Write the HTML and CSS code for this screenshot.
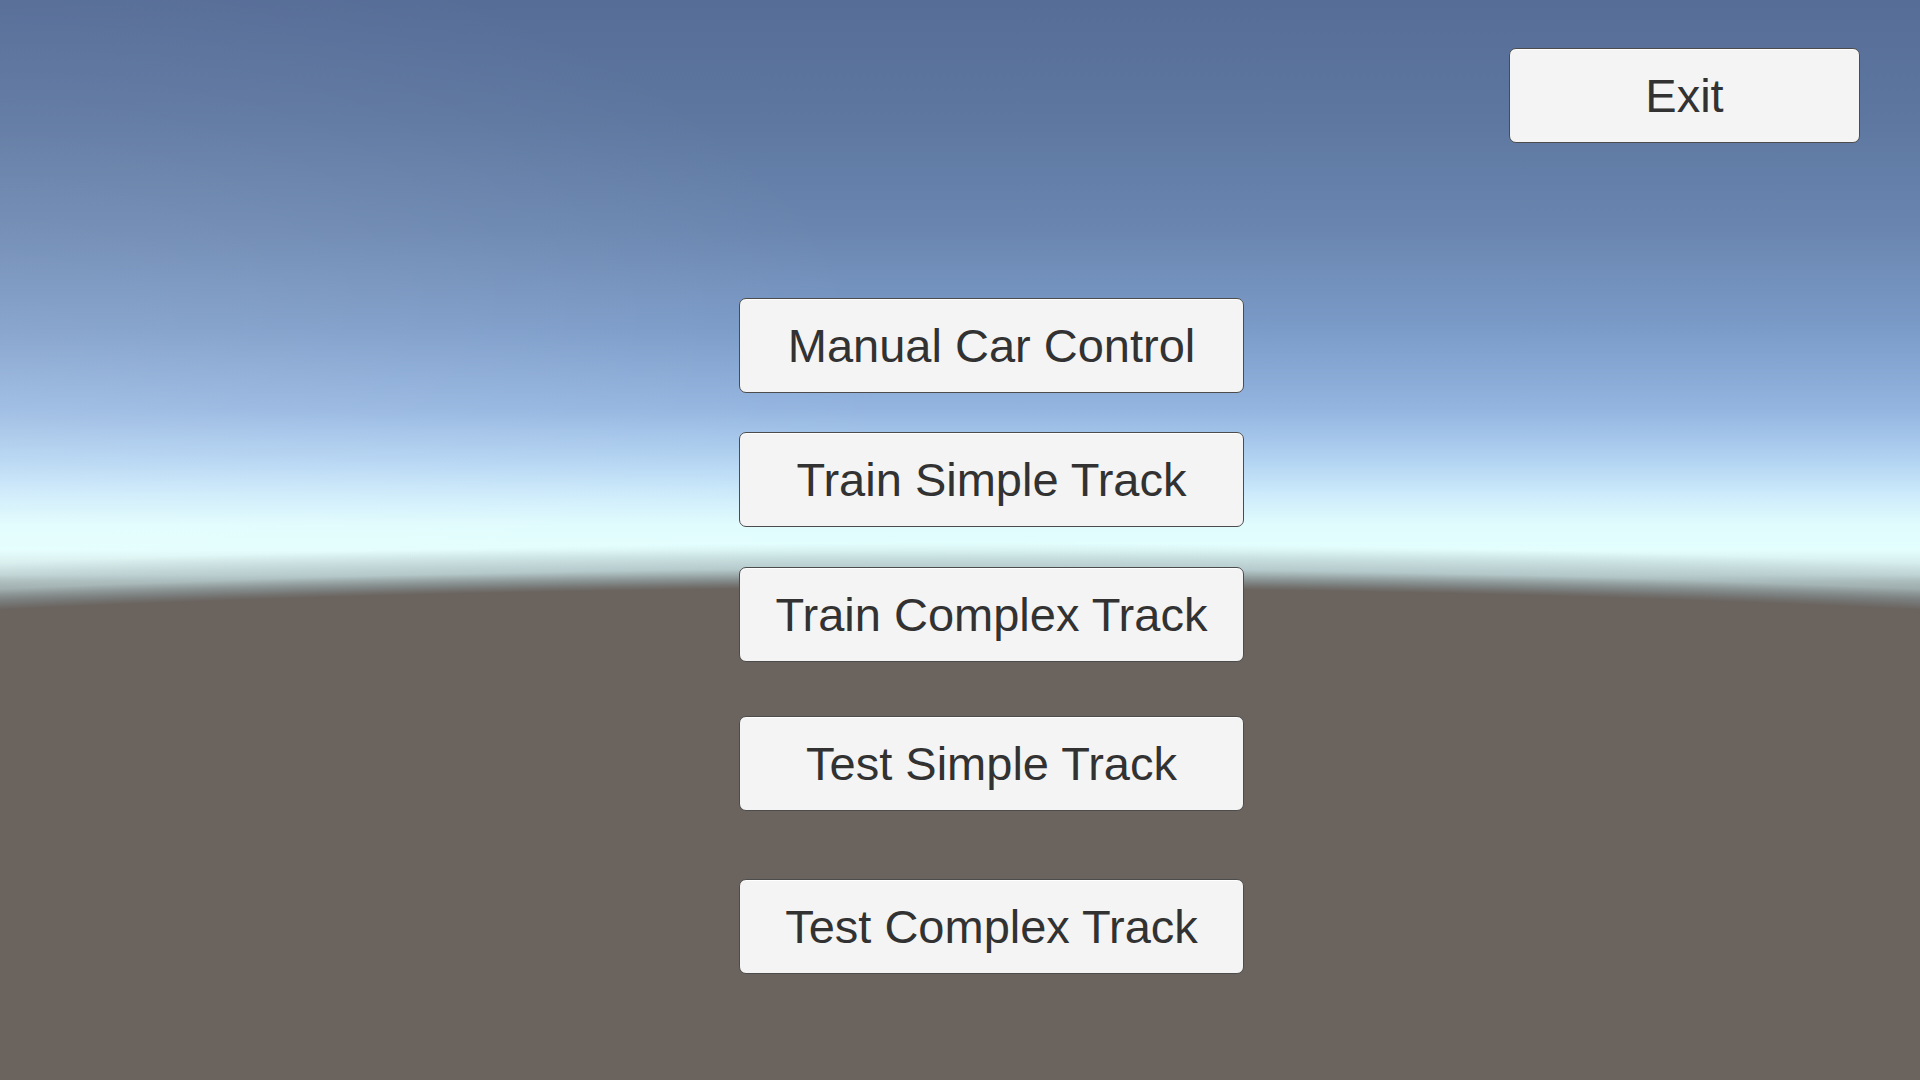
FILE: index.html
```html
<!DOCTYPE html>
<html lang="en">
<head>
<meta charset="utf-8">
<title>Main Menu</title>
<link rel="stylesheet" href="styles.css">
</head>
<body>
<div class="screen">
  <div class="topbar">
    <button class="btn btn-exit">Exit</button>
  </div>
  <div class="menu">
    <button class="btn btn-menu">Manual Car Control</button>
    <button class="btn btn-menu gap-1">Train Simple Track</button>
    <button class="btn btn-menu gap-2">Train Complex Track</button>
    <button class="btn btn-menu gap-3">Test Simple Track</button>
    <button class="btn btn-menu gap-4">Test Complex Track</button>
  </div>
</div>
</body>
</html>
```
FILE: styles.css
```css
html, body {
  margin: 0;
  padding: 0;
  width: 1920px;
  height: 1080px;
  overflow: hidden;
}

body {
  font-family: "Liberation Sans", Arial, sans-serif;
}

.screen {
  width: 1920px;
  height: 1080px;
  display: flex;
  flex-direction: column;
  background:
    radial-gradient(ellipse 3275px 500px at 50% 1088px,
      #6a635e 0%, #6a635e 100%,
      rgba(120, 125, 125, 0.85) 101.5%,
      rgba(165, 185, 188, 0.6) 104%,
      rgba(210, 235, 238, 0.0) 109%),
    radial-gradient(ellipse 900px 500px at 0% 420px,
      rgba(255, 255, 255, 0.13), rgba(255, 255, 255, 0) 100%),
    linear-gradient(to bottom,
      #566d97 0px,
      #5d77a0 120px,
      #6a86b0 230px,
      #7b9bc8 330px,
      #94b5e0 410px,
      #b2d3f2 460px,
      #cdebfb 495px,
      #e0fcfd 525px,
      #e3fefd 550px,
      #c9dede 575px,
      #6a635e 600px,
      #6a635e 760px,
      #6b635d 800px,
      #68615b 900px,
      #69605b 1080px);
}

.topbar {
  display: flex;
  justify-content: flex-end;
  padding: 48px 60px 0 0;
}

.menu {
  display: flex;
  flex-direction: column;
  align-items: flex-start;
  margin-top: 155px;
  padding-left: 739px;
}

.btn {
  box-sizing: border-box;
  height: 95px;
  margin: 0;
  padding: 0;
  background: #f4f4f4;
  border: 1px solid #4c4c4c;
  border-radius: 7px;
  box-shadow: inset 0 1px 0 #ffffff;
  color: #323232;
  font-family: "Liberation Sans", Arial, sans-serif;
  font-size: 47px;
  line-height: 1;
  text-align: center;
  cursor: pointer;
}

.btn-exit {
  width: 351px;
}

.btn-menu {
  width: 505px;
}

.gap-1 { margin-top: 39px; }
.gap-2 { margin-top: 40px; }
.gap-3 { margin-top: 54px; }
.gap-4 { margin-top: 68px; }
```
